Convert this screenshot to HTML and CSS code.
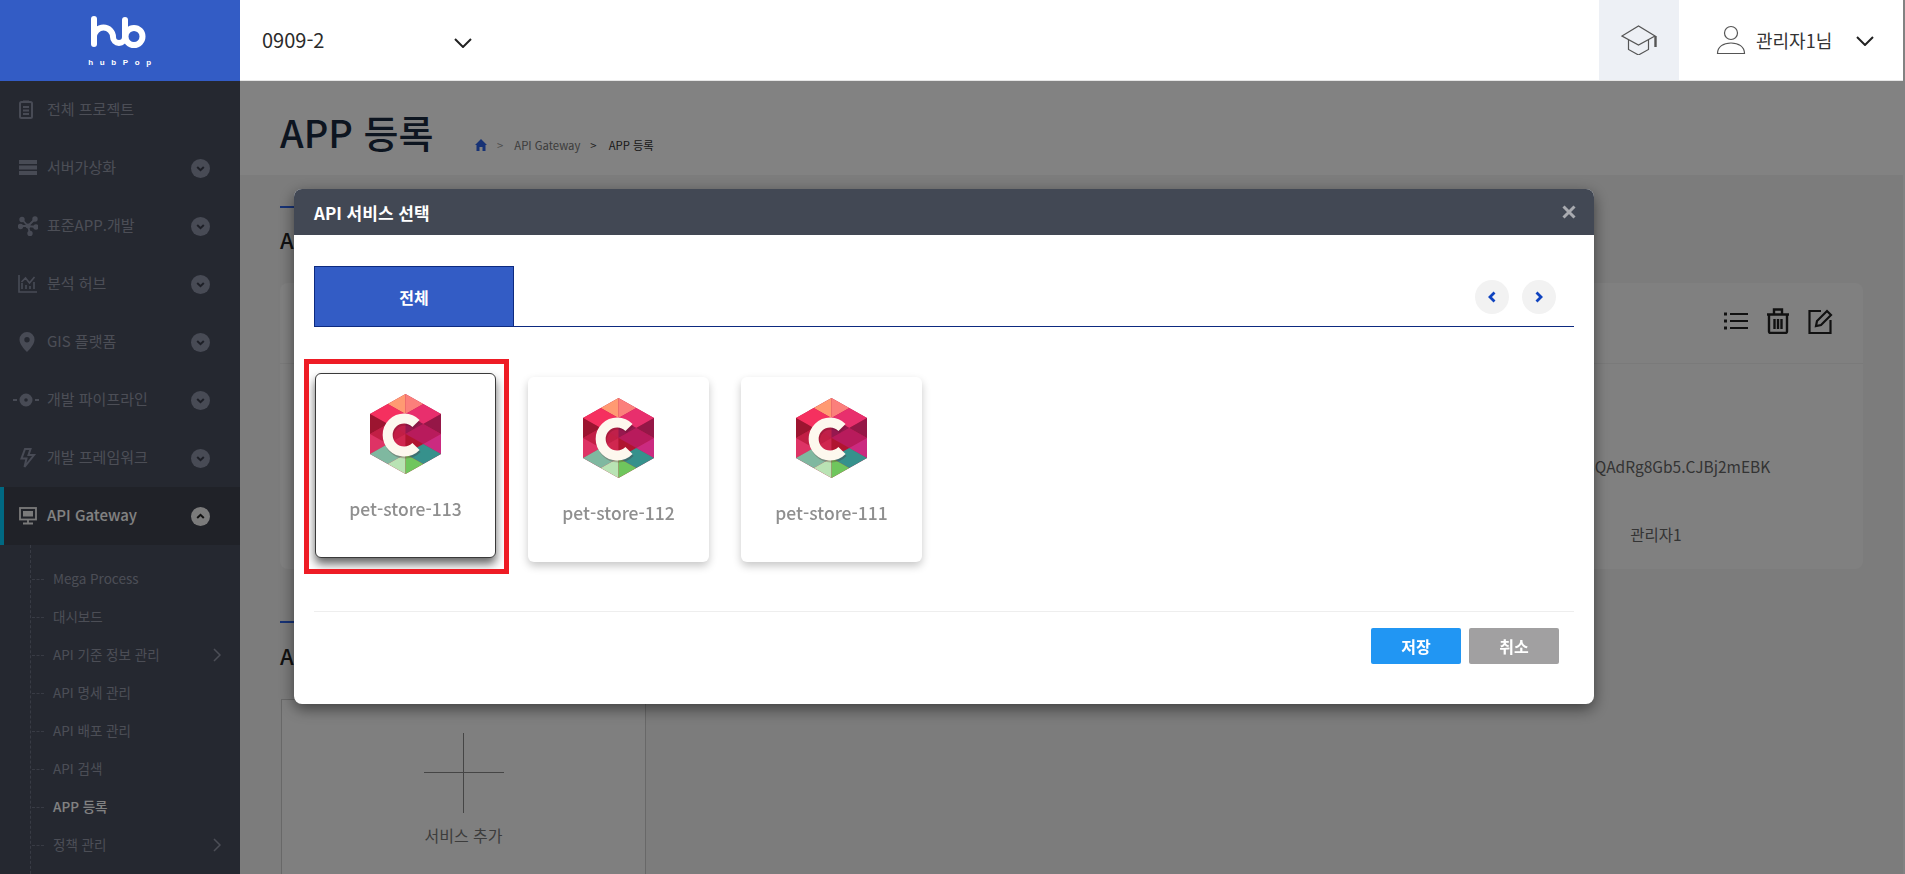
FILE: index.html
```html
<!DOCTYPE html>
<html lang="ko">
<head>
<meta charset="utf-8">
<title>APP 등록</title>
<link rel="stylesheet" href="styles.css">
</head>
<body>
<svg class="defs" width="0" height="0" aria-hidden="true">
  <defs>
    <symbol id="hex" viewBox="0 0 71 80">
      <polygon fill="#c0204a" points="35.5,0 71,20 71,60 35.5,80 0,60 0,20"/>
      <polygon fill="#ff9a72" points="35.5,0 17.75,10 35.5,20"/>
      <polygon fill="#fb7f7b" points="35.5,0 53.25,10 35.5,20"/>
      <polygon fill="#f5305f" points="17.75,10 0,20 17.75,30 35.5,20"/>
      <polygon fill="#e82f6d" points="53.25,10 71,20 53.25,30 35.5,20"/>
      <polygon fill="#9c1530" points="0,20 17.75,30 0,40"/>
      <polygon fill="#951747" points="71,20 53.25,30 71,40"/>
      <polygon fill="#c0204a" points="35.5,20 17.75,30 35.5,40"/>
      <polygon fill="#96184f" points="35.5,20 53.25,30 35.5,40"/>
      <polygon fill="#c21f45" points="0,40 17.75,30 35.5,40 17.75,50"/>
      <polygon fill="#b81b5c" points="71,40 53.25,30 35.5,40 53.25,50"/>
      <polygon fill="#de3365" points="0,40 17.75,50 0,60"/>
      <polygon fill="#cb2a80" points="71,40 53.25,50 71,60"/>
      <polygon fill="#d0274f" points="35.5,40 17.75,50 35.5,60"/>
      <polygon fill="#b01530" points="35.5,40 53.25,50 35.5,60"/>
      <polygon fill="#7fb8a0" points="0,60 17.75,50 35.5,60 17.75,70"/>
      <polygon fill="#36918c" points="71,60 53.25,50 35.5,60 53.25,70"/>
      <polygon fill="#b9e3b4" points="35.5,60 17.75,70 35.5,80"/>
      <polygon fill="#6fc65d" points="35.5,60 53.25,70 35.5,80"/>
      <path d="M47 31.500A16.500 16.500 0 1 0 47 54.500" fill="none" stroke="#5a1020" stroke-opacity=".25" stroke-width="10"/>
      <path d="M46 29.500A16.500 16.500 0 1 0 46 52.500" fill="none" stroke="#fdf8ee" stroke-width="10"/>
    </symbol>
    <symbol id="down" viewBox="0 0 19 19">
      <circle cx="9.5" cy="9.5" r="9.5" fill="#8d93a8"/>
      <path d="M6.2 8l3.3 3.2L12.8 8" fill="none" stroke="#3a3e4c" stroke-width="2"/>
    </symbol>
  </defs>
</svg>

<div class="app">
  <header class="topbar">
    <div class="brand">
      <svg class="brand-mark" width="60" height="36" viewBox="90 15 60 36" fill="none" stroke="#fff" stroke-width="6" stroke-linecap="round">
        <path d="M94 19V44"/>
        <path d="M94 37a9.5 9.5 0 0 1 19 0a6 6 0 0 0 12 0"/>
        <path d="M125 20V37"/>
        <circle cx="134" cy="36.5" r="8.5"/>
      </svg>
      <span class="brand-name">hubPop</span>
    </div>
    <div class="project">
      <span class="project-name">0909-2</span>
      <svg class="chev chev-project" width="18" height="10" viewBox="0 0 18 10"><path d="M1 1l8 8 8-8" fill="none" stroke="#222" stroke-width="2"/></svg>
    </div>
    <div class="study">
      <svg width="36" height="30" viewBox="0 0 36 30" fill="none" stroke="#555" stroke-width="1.2">
        <path d="M1 11L17.5 1 34 11 17.5 20z"/>
        <path d="M7.500 15v9.500l10 5.500 10-5.500V15"/>
        <path d="M34.500 11v11" stroke-width="2.400"/>
      </svg>
    </div>
    <div class="user">
      <svg width="30" height="30" viewBox="0 0 30 30" fill="none" stroke="#555" stroke-width="1.200">
        <circle cx="15" cy="8" r="6.500"/>
        <path d="M1.500 28.500c0-7 6-10.500 13.500-10.500s13.500 3.500 13.500 10.500z"/>
      </svg>
      <span class="user-name">관리자1님</span>
      <svg class="chev chev-user" width="18" height="10" viewBox="0 0 18 10"><path d="M1 1l8 8 8-8" fill="none" stroke="#222" stroke-width="2"/></svg>
    </div>
  </header>

  <div class="frame">
    <nav class="sidebar">
      <a class="nav-item">
        <svg class="nav-icon" viewBox="0 0 20 20" fill="none" stroke="currentColor" stroke-width="2"><rect x="2" y="2" width="12" height="16" rx="1.500"/><path d="M5 7h6M5 10.500h6M5 14h6M5 1.500h6"/></svg>
        <span class="nav-label">전체 프로젝트</span>
      </a>
      <a class="nav-item">
        <svg class="nav-icon" viewBox="0 0 20 20" fill="currentColor"><path d="M1 2h18v4H1zM1 7.500h18v4H1zM1 13h18v4H1z"/></svg>
        <span class="nav-label">서버가상화</span>
        <svg class="nav-toggle"><use href="#down"/></svg>
      </a>
      <a class="nav-item">
        <svg class="nav-icon" viewBox="0 0 20 20" fill="currentColor" stroke="currentColor" stroke-width="1.800"><path d="M10 10L4 3.500M10 10l7-7M10 10H2.500M10 10l8 1M10 10l2 7.500" fill="none"/><circle cx="10" cy="10" r="1.600"/><circle cx="4" cy="3.500" r="1.800"/><circle cx="17" cy="3" r="1.800"/><circle cx="2.500" cy="10.500" r="1.800"/><circle cx="18" cy="11" r="1.800"/><circle cx="12" cy="17.500" r="1.800"/></svg>
        <span class="nav-label">표준APP.개발</span>
        <svg class="nav-toggle"><use href="#down"/></svg>
      </a>
      <a class="nav-item">
        <svg class="nav-icon" viewBox="0 0 20 20" fill="none" stroke="currentColor" stroke-width="1.600"><path d="M1 1v17h18M4 15V9M8 15v-4M12 15v-3M16 15V8M3.500 8l4-4 4 5 5-6"/></svg>
        <span class="nav-label">분석 허브</span>
        <svg class="nav-toggle"><use href="#down"/></svg>
      </a>
      <a class="nav-item">
        <svg class="nav-icon" viewBox="1 0 20 20" fill="currentColor"><path fill-rule="evenodd" d="M10 0a7.500 7.500 0 0 0-7.500 7.500C2.500 12 7 17 10 20c3-3 7.500-8 7.500-12.500A7.500 7.500 0 0 0 10 0zm0 5a2.700 2.700 0 1 1 0 5.400A2.700 2.700 0 0 1 10 5z"/></svg>
        <span class="nav-label">GIS 플랫폼</span>
        <svg class="nav-toggle"><use href="#down"/></svg>
      </a>
      <a class="nav-item">
        <svg class="nav-icon nav-icon-wide" viewBox="0 0 26 20" fill="currentColor"><path d="M0 9h4v2H0zM22 9h4v2h-4z"/><path fill-rule="evenodd" d="M13 3.500a6.500 6.500 0 1 0 0 13 6.500 6.500 0 0 0 0-13zm0 4.700a1.800 1.800 0 1 1 0 3.600 1.800 1.800 0 0 1 0-3.600z"/></svg>
        <span class="nav-label">개발 파이프라인</span>
        <svg class="nav-toggle"><use href="#down"/></svg>
      </a>
      <a class="nav-item">
        <svg class="nav-icon" viewBox="0 0 20 20" fill="none" stroke="currentColor" stroke-width="2"><path d="M7 1h5.500L10.500 7h5.500L6.500 19l2-8.500H3.500z"/></svg>
        <span class="nav-label">개발 프레임워크</span>
        <svg class="nav-toggle"><use href="#down"/></svg>
      </a>
      <a class="nav-item nav-active">
        <svg class="nav-icon" viewBox="0 0 20 20" fill="none" stroke="currentColor" stroke-width="1.800"><rect x="2" y="2" width="16" height="11.500"/><path d="M5 5h10v5.500H5z" fill="currentColor" stroke="none"/><path d="M10 13.500V17M5 17.500h10"/></svg>
        <span class="nav-label">API Gateway</span>
        <svg class="nav-toggle" viewBox="0 0 19 19"><circle cx="9.500" cy="9.500" r="9.500" fill="#f2f2f2"/><path d="M6.200 11L9.500 7.800 12.800 11" fill="none" stroke="#222" stroke-width="2"/></svg>
      </a>
      <ul class="sub-nav">
        <li class="sub-item"><span class="sub-label">Mega Process</span></li>
        <li class="sub-item"><span class="sub-label">대시보드</span></li>
        <li class="sub-item"><span class="sub-label">API 기준 정보 관리</span><svg class="sub-arrow" width="8" height="14" viewBox="0 0 8 14"><path d="M1 1l6 6-6 6" fill="none" stroke="currentColor" stroke-width="1.500"/></svg></li>
        <li class="sub-item"><span class="sub-label">API 명세 관리</span></li>
        <li class="sub-item"><span class="sub-label">API 배포 관리</span></li>
        <li class="sub-item"><span class="sub-label">API 검색</span></li>
        <li class="sub-item sub-active"><span class="sub-label">APP 등록</span></li>
        <li class="sub-item"><span class="sub-label">정책 관리</span><svg class="sub-arrow" width="8" height="14" viewBox="0 0 8 14"><path d="M1 1l6 6-6 6" fill="none" stroke="currentColor" stroke-width="1.500"/></svg></li>
      </ul>
    </nav>

    <main class="main">
      <div class="page-head">
        <h1 class="page-title">APP 등록</h1>
        <div class="crumbs">
          <svg class="crumb-home" width="12" height="12" viewBox="0 0 12 12"><path d="M6 0L0 6h1.500v6h3V8h3v4h3V6H12z" fill="#2d63e6"/></svg>
          <span class="crumb-sep">&gt;</span>
          <span>API Gateway</span>
          <span class="crumb-sep crumb-dark">&gt;</span>
          <span class="crumb-now">APP 등록</span>
        </div>
      </div>
      <section class="section">
        <h2 class="section-title">APP 정보</h2>
        <div class="info-card">
          <div class="info-tools">
            <svg width="24" height="18" viewBox="0 0 24 18" fill="none" stroke="#222" stroke-width="2"><path d="M6 2h18M6 9h18M6 16h18"/><path d="M0 2h3M0 9h3M0 16h3" stroke-width="3"/></svg>
            <svg width="22" height="26" viewBox="0 0 22 26" fill="none" stroke="#222" stroke-width="2.400"><path d="M0 6.500h22M2 7v16.500a1.500 1.500 0 0 0 1.500 1.500h15a1.500 1.500 0 0 0 1.500-1.500V7M7 6V1.500h8V6M7.500 11v10M11 11v10M14.500 11v10"/></svg>
            <svg width="25" height="25" viewBox="0 0 25 25" fill="none" stroke="#222" stroke-width="2.200"><path d="M13 2H1.500v22h21V11"/><path d="M8 17l1-5L19 2l4 4-10 10z"/></svg>
          </div>
          <div class="info-row"><span class="info-value"></span></div>
          <div class="info-row"><span class="info-value">aX9kP3QAdRg8Gb5.CJBj2mEBK</span></div>
          <div class="info-row"><span class="info-value">관리자1</span></div>
        </div>
      </section>
      <section class="section section-next">
        <h2 class="section-title">API 서비스</h2>
        <div class="add-card">
          <div class="plus"></div>
          <span class="add-label">서비스 추가</span>
        </div>
      </section>
    </main>
  </div>
</div>

<div class="backdrop">
  <div class="modal">
    <div class="modal-head">
      <span class="modal-title">API 서비스 선택</span>
      <svg width="14" height="14" viewBox="0 0 14 14"><path d="M1.500 1.500l11 11M12.500 1.500l-11 11" stroke="#a9abb0" stroke-width="3"/></svg>
    </div>
    <div class="modal-body">
      <div class="tabs">
        <span class="tab">전체</span>
        <div class="tab-nav">
          <span class="tab-btn"><svg width="8" height="12" viewBox="0 0 8 12"><path d="M6.500 1.500L2 6l4.500 4.500" fill="none" stroke="#0f43bf" stroke-width="2.800"/></svg></span>
          <span class="tab-btn"><svg width="8" height="12" viewBox="0 0 8 12"><path d="M1.500 1.500L6 6l-4.500 4.500" fill="none" stroke="#0f43bf" stroke-width="2.800"/></svg></span>
        </div>
      </div>
      <div class="cards">
        <div class="svc-card svc-selected">
          <svg class="svc-icon"><use href="#hex"/></svg>
          <span class="svc-name">pet-store-113</span>
          <span class="mark"></span>
        </div>
        <div class="svc-card">
          <svg class="svc-icon"><use href="#hex"/></svg>
          <span class="svc-name">pet-store-112</span>
        </div>
        <div class="svc-card">
          <svg class="svc-icon"><use href="#hex"/></svg>
          <span class="svc-name">pet-store-111</span>
        </div>
      </div>
      <div class="modal-foot">
        <button class="btn btn-save">저장</button>
        <button class="btn btn-cancel">취소</button>
      </div>
    </div>
  </div>
</div>
</body>
</html>
```
FILE: styles.css
```css
* { box-sizing: border-box; }
html, body { margin: 0; height: 100%; overflow: hidden; background: #fff; }
body { font-family: "Noto Sans CJK KR", "Noto Sans", sans-serif; color: #333; }
.defs { position: absolute; }

.app { width: 1903px; height: 874px; display: flex; flex-direction: column; }

/* top bar */
.topbar { position: relative; z-index: 20; flex: 0 0 81px; height: 81px; display: flex; align-items: stretch; background: #fff; border-bottom: 1px solid #e6e6e6; }
.brand { width: 240px; height: 81px; background: #335cc5; display: flex; flex-direction: column; align-items: center; padding-top: 15px; }
.brand-mark { display: block; }
.brand-name { font-family: "Liberation Sans", sans-serif; font-weight: 700; font-size: 8px; line-height: 10px; letter-spacing: 6.600px; color: #fff; margin-top: 7px; margin-left: 6px; }
.project { width: 232px; display: flex; align-items: center; justify-content: space-between; padding-left: 22px; }
.project-name { font-size: 20px; color: #2b2b2b; line-height: 26px; }
.chev-project { margin-top: 5px; }
.study { margin-left: auto; width: 80px; background: #edf0f5; display: flex; align-items: center; justify-content: center; }
.user { width: 224px; display: flex; align-items: center; padding-left: 37px; }
.user-name { font-size: 18px; color: #333; margin-left: 10px; line-height: 24px; }
.chev-user { margin-left: 24px; margin-top: 2px; }

.frame { flex: 1; display: flex; min-height: 0; }

/* sidebar */
.sidebar { width: 240px; flex: none; background: #4a4f5f; overflow: hidden; color: #959aaa; }
.nav-item { height: 58px; display: flex; align-items: center; padding-left: 18px; position: relative; font-size: 15px; }
.nav-icon { width: 20px; height: 20px; flex: none; margin-right: 9px; color: #8d93a8; }
.nav-icon-wide { width: 26px; margin-left: -5px; margin-right: 8px; }
.nav-label { flex: 1; line-height: 22px; padding-bottom: 2px; }
.nav-toggle { width: 19px; height: 19px; flex: none; margin-right: 30px; }
.nav-active { background: #3f434f; color: #fff; font-weight: 500; border-left: 4px solid #00cfff; padding-left: 14px; }
.nav-active .nav-icon { color: #f0f0f0; }
.sub-nav { list-style: none; margin: 0 0 0 30px; padding: 15px 0 40px; border-left: 1px dashed #6e7486; }
.sub-item { height: 38px; display: flex; align-items: center; position: relative; padding-left: 22px; font-size: 13.500px; color: #959aaa; }
.sub-label { padding-bottom: 2px; }
.sub-item::before { content: ""; width: 12px; border-top: 1px dashed #6e7486; position: absolute; left: 1px; top: 19px; }
.sub-arrow { position: absolute; left: 182px; top: 12px; }
.sub-active { color: #fff; font-weight: 500; }

/* main */
.main { flex: 1; background: #f3f3f3; overflow: hidden; }
.page-head { height: 95px; background: #fff; padding: 0 40px; display: flex; align-items: flex-start; border-bottom: 1px solid #f3f3f3; }
.page-title { margin: 24px 0 0; font-size: 38px; line-height: 54px; font-weight: 500; color: #1a2a40; width: 195px; flex: none; }
.crumbs { display: flex; align-items: center; font-size: 11.300px; color: #777; height: 18px; margin-top: 55px; }
.crumb-home { margin-right: 10px; }
.crumb-sep { margin-right: 11px; color: #999; }
.crumb-dark { margin: 0 12px 0 10px; color: #444; }
.crumb-now { color: #333; }

.section { padding: 0 40px; margin-top: 30px; position: relative; }
.section::before { content: ""; display: block; width: 60px; height: 2px; background: #2d63e6; }
.section-title { margin: 13px 0 0; font-size: 22px; line-height: 36px; font-weight: 500; color: #222; }
.section-next { margin-top: 52px; }
.info-card { margin-top: 26px; height: 286px; background: #fcfcfc; border-radius: 8px; }
.info-tools { height: 81px; border-bottom: 1px solid #f0f0f0; display: flex; align-items: center; justify-content: flex-end; gap: 19px; padding: 0 30px 4px 0; }
.info-row { height: 68px; display: flex; justify-content: flex-end; align-items: center; }
.info-value { width: 414px; text-align: center; font-size: 15.500px; color: #666; white-space: nowrap; }
.section-next .section-title { margin-top: 14px; }
.section-next .add-card { margin-top: 26px; }
.add-card { width: 365px; height: 200px; margin-left: 1px; border: 1px solid #ccc; background: #fafafa; display: flex; flex-direction: column; align-items: center; }
.plus { position: relative; width: 80px; height: 80px; margin-top: 33px; }
.plus::before { content: ""; position: absolute; left: 0; right: 0; top: 39px; border-top: 1px solid #888; }
.plus::after { content: ""; position: absolute; top: 0; bottom: 0; left: 39px; border-left: 1px solid #888; }
.add-label { margin-top: 10px; font-size: 16px; line-height: 24px; color: #777; }

/* modal */
.backdrop { position: fixed; inset: 0; z-index: 10; background: rgba(0, 0, 0, .49); }
.modal { position: absolute; left: 294px; top: 189px; width: 1300px; height: 515px; background: #fff; border-radius: 8px; box-shadow: 0 5px 15px rgba(0, 0, 0, .5); display: flex; flex-direction: column; }
.modal-head { flex: none; height: 46px; background: #424854; border-radius: 8px 8px 0 0; display: flex; align-items: center; justify-content: space-between; padding: 0 18px 0 20px; }
.modal-title { color: #fff; font-size: 17px; font-weight: 700; line-height: 24px; padding-top: 1px; }
.modal-body { flex: 1; padding: 31px 20px 0; display: flex; flex-direction: column; }
.tabs { height: 61px; display: flex; align-items: stretch; justify-content: space-between; border-bottom: 1px solid #0d2a80; }
.tab { width: 200px; background: #335cc5; border: 1px solid #0d2a80; border-bottom: 0; color: #fff; font-size: 16px; font-weight: 700; display: flex; align-items: center; justify-content: center; }
.tab-nav { display: flex; gap: 13px; margin-right: 18px; padding-top: 14px; }
.tab-btn { width: 34px; height: 34px; border-radius: 50%; background: #f2f2f2; display: flex; align-items: center; justify-content: center; }
.cards { display: flex; gap: 32px; padding-left: 1px; margin-top: 50px; }
.svc-card { position: relative; width: 181px; height: 185px; background: #fff; border-radius: 6px; box-shadow: 0 4px 8px rgba(0, 0, 0, .22); display: flex; flex-direction: column; align-items: center; padding-top: 21px; }
.svc-selected { transform: translateY(-4px); border: 1px solid #3a3a3a; padding-top: 20px; box-shadow: 0 6px 10px rgba(0, 0, 0, .6); }
.svc-icon { width: 71px; height: 80px; display: block; filter: blur(.35px); }
.svc-name { margin-top: 23px; font-size: 17.500px; font-weight: 500; line-height: 24px; color: #8f8f8f; }
.mark { position: absolute; left: -12px; top: -15px; width: 205px; height: 215px; border: 5px solid #ee1c25; }
.modal-foot { margin-top: 49px; border-top: 1px solid #eee; padding: 16px 15px 0 0; display: flex; justify-content: flex-end; gap: 8px; }
.btn { width: 90px; height: 36px; border: 0; border-radius: 2px; color: #fff; font: 700 16px "Noto Sans CJK KR", sans-serif; padding: 0; }
.btn-save { background: #2196f3; }
.btn-cancel { background: #a1a0a1; }
```
